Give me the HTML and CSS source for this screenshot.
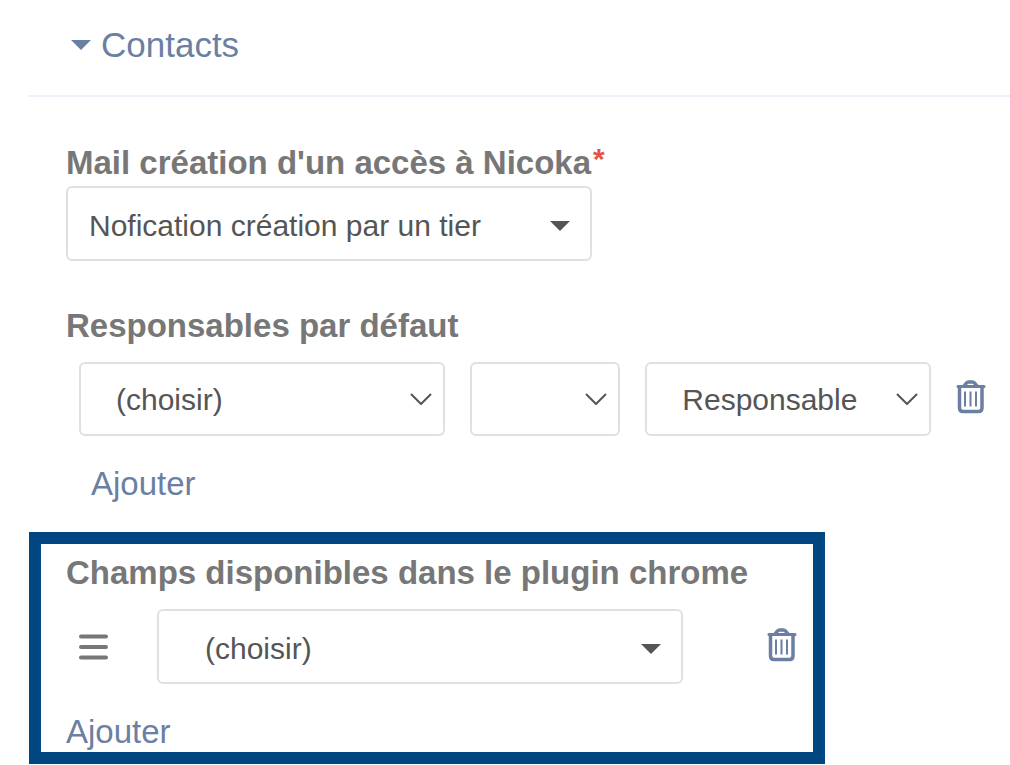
FILE: index.html
```
<!DOCTYPE html>
<html lang="fr">
<head>
    <meta charset="utf-8">
    <title>Contacts</title>
    <link rel="stylesheet" href="styles.css">
</head>
<body>
    <svg width="0" height="0" class="sprite" aria-hidden="true">
        <symbol id="trash" viewBox="0 0 30 34">
            <path d="M2 6.500H28" fill="none" stroke="currentColor" stroke-width="3" stroke-linecap="round"/>
            <path d="M8 6L10.500 3Q11.500 2 12.500 2H16.500Q17.500 2 18.500 3L21 6M3.500 7V28Q3.500 31.500 7 31.500H22.500Q26 31.500 26 28V7" fill="none" stroke="currentColor" stroke-width="3.500"/>
            <path d="M9 11.500V26.500M14.500 11.500V26.500M20 11.500V26.500" fill="none" stroke="currentColor" stroke-width="2"/>
        </symbol>
    </svg>

    <header class="section-header">
        <button class="section-toggle" type="button" aria-expanded="true">
            <span class="caret"></span>Contacts
        </button>
    </header>

    <form class="settings">
        <div class="field">
            <label class="field-label" for="mail">Mail création d'un accès à Nicoka<span class="required">*</span></label>
            <select class="select select-caret" id="mail">
                <option>Nofication création par un tier</option>
            </select>
        </div>

        <div class="field">
            <label class="field-label" for="responsable">Responsables par défaut</label>
            <div class="responsables">
                <select class="select" id="responsable">
                    <option>(choisir)</option>
                </select>
                <select class="select" aria-label="Type">
                    <option></option>
                </select>
                <select class="select" aria-label="Rôle">
                    <option>Responsable</option>
                </select>
                <button class="icon-button" type="button" aria-label="Supprimer">
                    <svg class="icon"><use href="#trash"/></svg>
                </button>
            </div>
            <a class="add-link add-indent" href="#">Ajouter</a>
        </div>

        <div class="highlight">
            <label class="field-label" for="champ">Champs disponibles dans le plugin chrome</label>
            <div class="champs">
                <button class="icon-button drag" type="button" aria-label="Déplacer">
                    <svg class="icon" viewBox="0 0 30 34">
                        <path d="M3 6.500H28M3 17H28M3 27.500H28" stroke="currentColor" stroke-width="4" stroke-linecap="round"/>
                    </svg>
                </button>
                <select class="select select-caret select-wide" id="champ">
                    <option>(choisir)</option>
                </select>
                <button class="icon-button remove" type="button" aria-label="Supprimer">
                    <svg class="icon"><use href="#trash"/></svg>
                </button>
            </div>
            <a class="add-link" href="#">Ajouter</a>
        </div>
    </form>
</body>
</html>
```
FILE: styles.css
```
* {
    box-sizing: border-box;
}

body {
    margin: 0;
    padding-left: 28px;
    background-color: #fff;
    color: #555;
    font-family: "Liberation Sans", Arial, sans-serif;
}

.sprite {
    display: none;
}

.section-header {
    padding: 24px 43px 30px;
    border-bottom: 2px solid #eff0f7;
}

.section-toggle {
    display: flex;
    align-items: center;
    gap: 10px;
    padding: 0;
    border: none;
    background: none;
    color: #6b7fa3;
    font-family: inherit;
    font-size: 35px;
    line-height: 41px;
    cursor: pointer;
}

.caret {
    border: 10px solid transparent;
    border-top-color: #6b7fa3;
    border-bottom: none;
}

.settings {
    padding-top: 47px;
}

.field {
    padding: 0 24px 0 38px;
}

.field-label {
    display: block;
    color: #777;
    font-size: 33px;
    font-weight: bold;
    line-height: 38px;
}

.required {
    padding-left: 2px;
    color: #e55346;
    font-size: 30px;
    line-height: 30px;
    vertical-align: top;
}

.select {
    display: block;
    width: 100%;
    height: 74px;
    padding: 0 50px 0 35px;
    border: 2px solid #e0e0e0;
    border-radius: 6px;
    appearance: none;
    /* thin chevron */
    background: #fff url("data:image/svg+xml,%3Csvg xmlns='http://www.w3.org/2000/svg' width='22' height='12'%3E%3Cpath d='M1 1L11 11L21 1' fill='none' stroke='%23555' stroke-width='2'/%3E%3C/svg%3E") no-repeat right 11px center;
    color: #555;
    font-family: inherit;
    font-size: 30px;
}

.select-caret {
    max-width: 526px;
    height: 75px;
    padding: 4px 50px 0 21px;
    background-image: url("data:image/svg+xml,%3Csvg xmlns='http://www.w3.org/2000/svg' width='20' height='10'%3E%3Cpath d='M0 0H20L10 10Z' fill='%23555'/%3E%3C/svg%3E");
    background-position: right 20px top 33px;
}

.select-wide {
    padding-left: 46px;
}

#mail {
    margin: 4px 0 46px;
}

.responsables {
    display: grid;
    grid-template-columns: 73fr 30fr 57fr 30px;
    align-items: center;
    gap: 25px;
    margin: 17px 0 29px 13px;
}

.icon-button {
    padding: 0;
    border: none;
    background: none;
    color: #6b7fa3;
    cursor: pointer;
}

.icon {
    display: block;
    width: 30px;
    height: 34px;
}

.responsables .icon-button {
    padding-bottom: 4px;
}

.add-link {
    display: inline-block;
    color: #6b7fa3;
    font-size: 33px;
    line-height: 38px;
    text-decoration: none;
}

.add-indent {
    margin-left: 25px;
}

.highlight {
    max-width: 796px;
    margin: 29px 0 0 1px;
    padding: 10px 16px 1px 25px;
    border: 12px solid #004680;
}

.champs {
    display: flex;
    align-items: center;
    margin: 17px 0 29px;
}

.drag {
    margin: 0 49px 0 12px;
    color: #777;
}

.remove {
    margin-left: auto;
    padding-bottom: 4px;
}
```
